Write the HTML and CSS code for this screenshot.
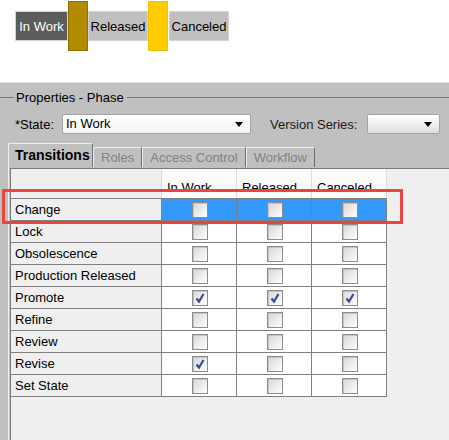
FILE: index.html
```html
<!DOCTYPE html>
<html lang="en">
<head>
    <meta charset="UTF-8">
    <meta name="viewport" content="width=device-width, initial-scale=1.0">
    <title>Phase Properties</title>
    <link rel="stylesheet" href="styles.css">
</head>
<body>
    <div class="page">
        <!-- lifecycle states with their colour bars -->
        <div class="states">
            <div class="state-box current">In Work</div>
            <div class="state-bar gold"></div>
            <div class="state-box">Released</div>
            <div class="state-bar yellow"></div>
            <div class="state-box">Canceled</div>
        </div>

        <div class="props">
            <div class="legend">
                <span class="legend-line short"></span>
                <span class="legend-text">Properties - Phase</span>
                <span class="legend-line"></span>
            </div>

            <div class="form-row">
                <label class="field-label">*State:</label>
                <div class="combo combo-state">In Work<span class="arrow"></span></div>
                <label class="field-label series-label">Version Series:</label>
                <div class="combo combo-series"><span class="arrow"></span></div>
            </div>

            <div class="tabs">
                <div class="tab active">Transitions</div>
                <div class="tab">Roles</div>
                <div class="tab">Access Control</div>
                <div class="tab">Workflow</div>
            </div>

            <div class="tab-panel">
                <div class="tab-body">
                    <table class="transitions">
                        <colgroup>
                            <col class="col-label">
                            <col class="col-state">
                            <col class="col-state">
                            <col class="col-state">
                        </colgroup>
                        <thead>
                            <tr>
                                <th class="blank"></th>
                                <th>In Work</th>
                                <th>Released</th>
                                <th>Canceled</th>
                            </tr>
                        </thead>
                        <tbody id="rows">
                            <!-- rows are built by the script below -->
                        </tbody>
                    </table>
                </div>
            </div>
        </div>

        <div class="highlight"></div>
    </div>

    <script>
        // transition name, then checked flags for In Work / Released / Canceled
        const transitions = [
            ['Change', [false, false, false]],
            ['Lock', [false, false, false]],
            ['Obsolescence', [false, false, false]],
            ['Production Released', [false, false, false]],
            ['Promote', [true, true, true]],
            ['Refine', [false, false, false]],
            ['Review', [false, false, false]],
            ['Revise', [true, false, false]],
            ['Set State', [false, false, false]]
        ];

        const checkSvg = '<svg viewBox="0 0 16 16" width="16" height="16"><path d="M4.5 8.5 L7 11.5 L11.5 4" fill="none" stroke="#3b4b9c" stroke-width="2.2"/></svg>';

        function buildRows() {
            const body = document.getElementById('rows');
            transitions.forEach((item, i) => {
                const row = document.createElement('tr');
                if (i === 0) row.className = 'selected';
                let html = `<td class="label">${item[0]}</td>`;
                item[1].forEach((checked, c) => {
                    const focus = i === 0 && c === 1 ? ' focus' : '';
                    html += `<td class="cell${focus}"><span class="check">${checked ? checkSvg : ''}</span></td>`;
                });
                row.innerHTML = html;
                body.appendChild(row);
            });
        }

        buildRows();
    </script>
</body>
</html>
```

FILE: styles.css
```css
body {
    margin: 0;
    font-family: "Liberation Sans", Arial, sans-serif;
    font-size: 13px;
    color: #000;
    background-color: #fff;
}
.page {
    position: relative;
    width: 449px;
    height: 440px;
    overflow: hidden;
}
.states {
    height: 82px;
    box-sizing: border-box;
    padding: 1px 0 0 15px;
    display: flex;
    align-items: flex-start;
}
.state-box {
    margin-top: 10px;
    width: 60px;
    height: 30px;
    box-sizing: border-box;
    display: flex;
    align-items: center;
    justify-content: center;
    background-color: #c0c0c0;
    border: 1px solid #d4d4d4;
}
.state-box.current {
    width: 53px;
    background-color: #5c5c5c;
    color: #fff;
}
.state-bar {
    width: 20px;
    height: 50px;
    box-sizing: border-box;
}
.gold {
    background-color: #b38b00;
    border: 1px solid #8f6f00;
}
.yellow {
    background-color: #ffcc00;
    border: 1px solid #f0c000;
    margin-right: 1px;
}
.props {
    height: 358px;
    background-color: #c0c0c0;
    border-top: 1px solid #e2e2e2;
    padding-top: 7px;
    box-sizing: border-box;
}
.legend {
    height: 15px;
    display: flex;
    align-items: center;
}
.legend-line {
    flex: 1;
    height: 1px;
    background-color: #7a7a7a;
}
.legend-line.short {
    flex: none;
    width: 14px;
}
.legend-text {
    padding: 0 3px 0 2px;
}
.form-row {
    margin-top: 9px;
    height: 20px;
    display: flex;
    align-items: center;
    padding-left: 15px;
}
.field-label {
    width: 47px;
}
.series-label {
    width: auto;
    margin-left: 19px;
    margin-right: 10px;
    color: #1a1a1a;
}
.combo {
    position: relative;
    height: 20px;
    box-sizing: border-box;
    border: 1px solid #a4a4a4;
    border-radius: 2px;
    padding-left: 3px;
    line-height: 18px;
    background: linear-gradient(#ffffff, #f4f4f4);
}
.combo-state {
    width: 189px;
}
.combo-series {
    width: 73px;
    background: linear-gradient(#ffffff, #dedede);
}
.arrow {
    position: absolute;
    right: 7px;
    top: 7px;
    width: 0;
    height: 0;
    border-left: 4px solid transparent;
    border-right: 4px solid transparent;
    border-top: 5px solid #000;
}
.tabs {
    margin-top: 9px;
    height: 24px;
    padding-left: 8px;
    display: flex;
    align-items: flex-end;
}
.tab {
    height: 20px;
    box-sizing: border-box;
    padding: 0 7px;
    line-height: 19px;
    color: #828282;
    border-top: 1px solid #f0f0f0;
    border-left: 1px solid #f0f0f0;
    border-right: 1px solid #6e6e6e;
    border-top-left-radius: 2px;
    border-top-right-radius: 2px;
}
.tab.active {
    height: 24px;
    width: 85px;
    padding-left: 6px;
    line-height: 22px;
    color: #000;
    font-weight: bold;
    font-size: 14px;
}
.tab-panel {
    margin-left: 8px;
    padding: 1px 0 0 1px;
    border-left: 1px solid #f0f0f0;
}
.tab-body {
    height: 290px;
    background-color: #efefef;
    border-top: 1px solid #7a7a7a;
    border-left: 1px solid #7a7a7a;
}
.transitions {
    width: 376px;
    table-layout: fixed;
    border-spacing: 0;
}
.col-label {
    width: 151px;
}
.col-state {
    width: 75px;
}
.transitions th {
    height: 29px;
    padding: 0 0 3px 5px;
    box-sizing: border-box;
    text-align: left;
    vertical-align: bottom;
    font-weight: normal;
    background-color: #fbfbfb;
    border-right: 1px solid #dedede;
}
.transitions th.blank {
    background-color: #efefef;
}
.transitions td {
    height: 21px;
    padding: 0;
    border-right: 1px solid #808080;
    border-bottom: 1px solid #808080;
}
.transitions tbody tr:first-child td {
    border-top: 1px solid #808080;
}
.transitions td.label {
    padding-left: 4px;
}
.transitions td.cell {
    background-color: #fff;
    text-align: center;
    vertical-align: middle;
}
.selected td.cell {
    background-color: #3399ff;
}
.selected td.focus {
    outline: 1px dotted #c0702a;
    outline-offset: -1px;
}
.check {
    display: inline-block;
    width: 16px;
    height: 16px;
    box-sizing: border-box;
    vertical-align: middle;
    margin-left: 1px;
    border: 1px solid #8c8c8c;
    box-shadow: inset 1px 1px 0 #c4c4c4;
    background: linear-gradient(135deg, #d6d6d6, #ffffff);
}
.check svg {
    display: block;
    margin: -1px;
}
.highlight {
    position: absolute;
    left: 2px;
    top: 189px;
    width: 401px;
    height: 35px;
    box-sizing: border-box;
    border: 3px solid #e8453f;
}
```
